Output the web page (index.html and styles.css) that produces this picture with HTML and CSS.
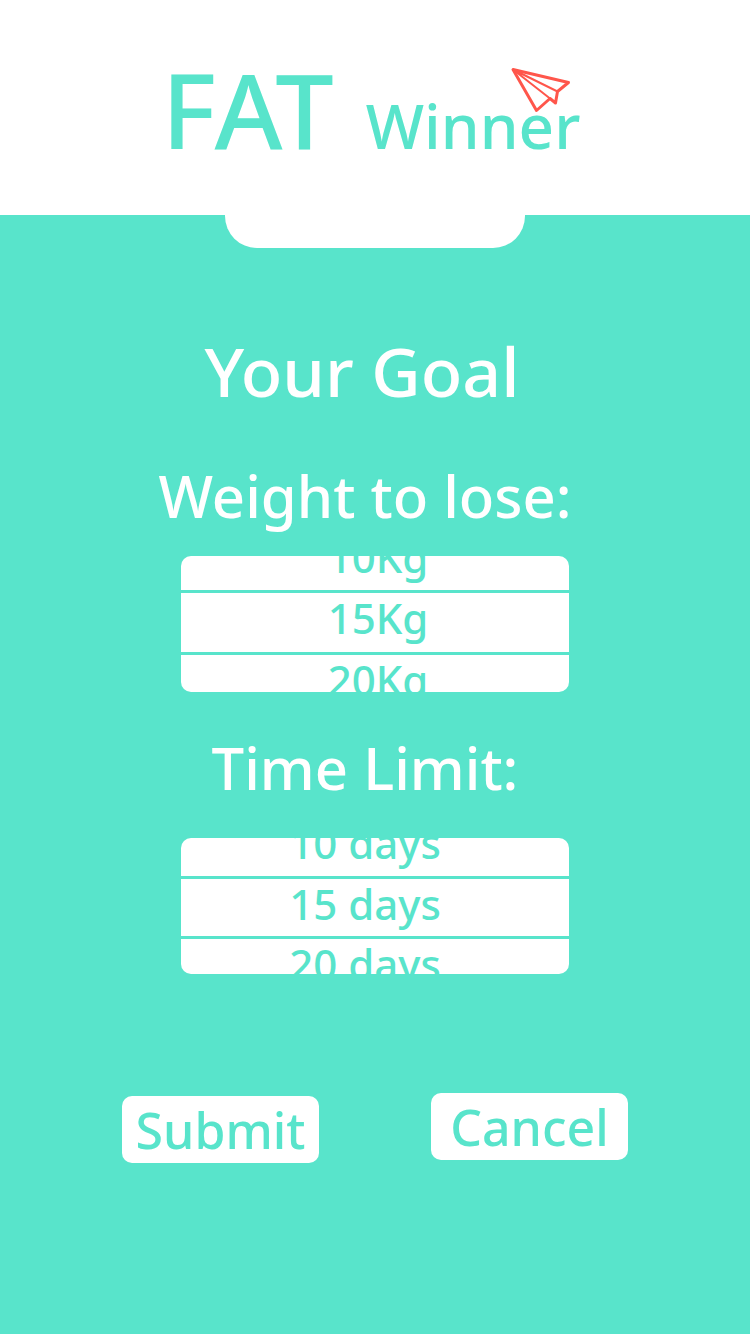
FILE: index.html
```html
<!DOCTYPE html>
<html lang="en">
<head>
<meta charset="utf-8">
<meta name="viewport" content="width=device-width, initial-scale=1">
<title>FAT Winner</title>
<link rel="stylesheet" href="styles.css">
</head>
<body>
<header class="header">
  <h1 class="logo">
    <span class="logo-main">FAT</span>
    <span class="logo-sub">Winner</span>
    <svg class="logo-plane" viewBox="0 0 61 48" aria-hidden="true">
      <path class="plane-edge" d="M3 3.5 58.500 16.500 47.500 25.500 45.500 37 40 32.500 26.500 44.500Z"/>
      <path class="plane-fold" d="M3 3.500 47.500 25.500M3 3.500 40 32.500"/>
    </svg>
  </h1>
</header>
<div class="tab"></div>
<main>
  <form class="goal">
    <h2 class="title">Your Goal</h2>

    <h3 class="label" id="weight-label">Weight to lose:</h3>
    <div class="picker picker-weight" role="radiogroup" aria-labelledby="weight-label">
      <label class="option"><input type="radio" name="weight" value="10"><span>10Kg</span></label>
      <label class="option"><input type="radio" name="weight" value="15" checked><span>15Kg</span></label>
      <label class="option"><input type="radio" name="weight" value="20"><span>20Kg</span></label>
    </div>

    <h3 class="label" id="time-label">Time Limit:</h3>
    <div class="picker picker-time" role="radiogroup" aria-labelledby="time-label">
      <label class="option"><input type="radio" name="time" value="10"><span>10 days</span></label>
      <label class="option"><input type="radio" name="time" value="15" checked><span>15 days</span></label>
      <label class="option"><input type="radio" name="time" value="20"><span>20 days</span></label>
    </div>

    <div class="actions">
      <button class="button button-submit" type="submit">Submit</button>
      <button class="button" type="button">Cancel</button>
    </div>
  </form>
</main>
</body>
</html>
```
FILE: styles.css
```css
:root {
  --mint: #58e4cb;
  --coral: #ff564b;
}

* {
  box-sizing: border-box;
}

body {
  margin: 0;
  min-height: 100vh;
  background: var(--mint);
  color: #fff;
  font-family: "Noto Sans", "Open Sans", sans-serif;
}

h1, h2, h3 {
  margin: 0;
}

.header {
  display: flex;
  justify-content: center;
  padding: 49px 8px 30px 0;
  background: #fff;
}

.logo {
  position: relative;
  display: flex;
  align-items: baseline;
  gap: 32px;
  color: var(--mint);
  font-weight: 500;
  line-height: 120px;
}

.logo-main {
  font-size: 104px;
}

.logo-sub {
  font-size: 62px;
}

.logo-plane {
  position: absolute;
  top: 17px;
  right: 9px;
  width: 61px;
  height: 48px;
  fill: none;
  stroke: var(--coral);
  stroke-linejoin: round;
}

.plane-edge {
  stroke-width: 3;
}

.plane-fold {
  stroke-width: 2;
}

.tab {
  width: 40%;
  height: 33px;
  margin: 0 auto;
  background: #fff;
  border-radius: 0 0 32px 32px;
}

.goal {
  display: flex;
  flex-direction: column;
  align-items: center;
  padding: 83px 0 80px;
}

.title {
  padding-right: 26px;
  font-size: 68px;
  font-weight: 500;
  line-height: 80px;
}

.label {
  padding-right: 20px;
  font-size: 58px;
  font-weight: 500;
  line-height: 72px;
}

.title + .label {
  margin-top: 49px;
}

.picker + .label {
  margin-top: 40px;
}

.picker {
  display: grid;
  width: 100%;
  max-width: 388px;
  overflow: hidden;
  background: #fff;
  border-radius: 10px;
  color: var(--mint);
  font-size: 42px;
  font-weight: 500;
  line-height: 50px;
}

.picker-weight {
  grid-template-rows: 34px 65px 37px;
  margin-top: 24px;
}

.picker-time {
  grid-template-rows: 38px 63px 35px;
  margin-top: 34px;
}

.option {
  display: flex;
  justify-content: center;
  align-items: flex-start;
  overflow: hidden;
  cursor: pointer;
}

.picker-weight .option {
  padding-left: 6px;
}

.picker-time .option {
  padding-right: 20px;
}

.option:first-child {
  align-items: flex-end;
  padding-bottom: 8px;
}

.option:nth-child(2) {
  border: solid var(--mint);
  border-width: 3px 0;
}

.option input {
  appearance: none;
  width: 0;
  height: 0;
  margin: 0;
}

.actions {
  display: flex;
  justify-content: center;
  align-items: flex-start;
  gap: 112px;
  margin-top: 119px;
}

.button {
  width: 197px;
  height: 67px;
  padding: 0;
  border: 0;
  border-radius: 10px;
  background: #fff;
  color: var(--mint);
  font: 500 50px/66px "Noto Sans", "Open Sans", sans-serif;
  cursor: pointer;
}

.button-submit {
  margin-top: 3px;
}
```
